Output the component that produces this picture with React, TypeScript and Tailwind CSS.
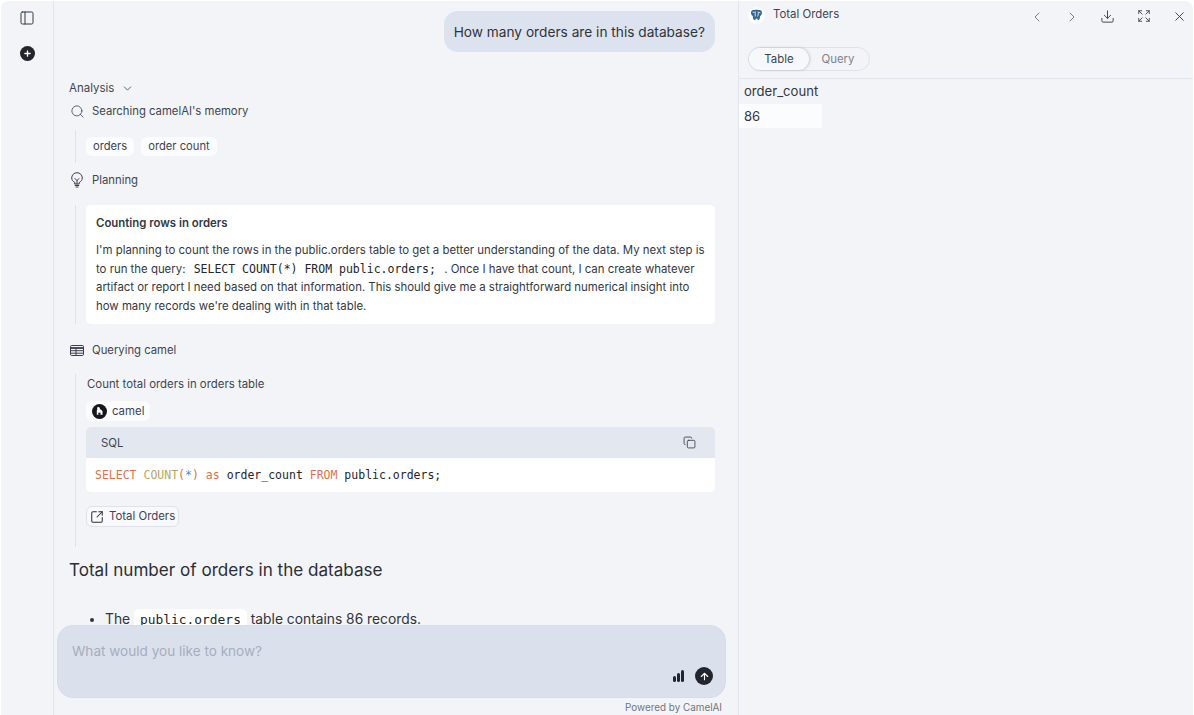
import React from "react";
import { ChevronDown, ChevronLeft, ChevronRight, Search, Copy, SquareArrowOutUpRight, Download, X, PanelLeft, Plus, ArrowUp, Expand } from "lucide-react";

const mono = "font-['DejaVu_Sans_Mono',monospace]";

function Step({ icon, label }: { icon: React.ReactNode; label: string }) {
  return (
    <div className="flex h-5 items-center gap-[7px] text-[11.3px] text-[#3f4450]">
      <span className="flex w-4 justify-center text-[#3a3f4a]">{icon}</span>
      <span>{label}</span>
    </div>
  );
}

function Chip({ children }: { children: React.ReactNode }) {
  return <span className="flex h-[19px] items-center rounded-md bg-[#fbfcfe] px-[7px] text-[11.2px] text-[#3f4450]">{children}</span>;
}

function Bulb() {
  return (
    <svg width="14" height="16" viewBox="0 0 14 16" fill="none" stroke="#3a3f4a" strokeWidth="1" strokeLinecap="round" strokeLinejoin="round">
      <path d="M4.800 10.500C3 9.500 1.700 8 1.700 6A5.300 5.300 0 0 1 12.300 6c0 2-1.300 3.500-3.100 4.500v1.500H4.800z" />
      <path d="M5 6.500l2 2 2-2M7 8.500V12M5.200 13.500h3.600M6 15h2" />
    </svg>
  );
}

function TableIcon() {
  return (
    <svg width="14" height="11" viewBox="0 0 14 11" fill="none" stroke="#3a3f4a" strokeWidth="1">
      <rect x=".5" y=".5" width="13" height="10" rx="1.200" />
      <path d="M.5 3h13" strokeWidth="1.800" />
      <path d="M.5 5.700h13M.5 8.200h13M6 3v7.500" />
    </svg>
  );
}

function Elephant() {
  return (
    <svg width="17" height="17" viewBox="0 0 17 17">
      <circle cx="8.500" cy="8.500" r="8.500" fill="#fbfcfe" />
      <path d="M3 5.500C3 3.400 4.700 2.600 6.400 3.100c1.300-.6 2.900-.6 4.200 0 1.700-.5 3.400.3 3.400 2.400 0 1.900-1 3.100-1.800 3.500-.2 1.700-.4 3.800-1.700 4-.8.100-1.100-.7-1.200-1.500-.5.200-1.100.2-1.500 0-.1 1.200-.6 1.800-1.400 1.600-1.200-.2-1.500-2.500-1.600-4C3.800 8.600 3 7.200 3 5.500z" fill="#336791" />
      <path d="M7.200 4.500v5M10 4.500c.6 1.500.3 3.300-.4 5M4.600 5.300h2M10.600 5.600h1.800" stroke="#fff" strokeWidth=".8" fill="none" />
    </svg>
  );
}

function CamelLogo() {
  return (
    <svg width="15" height="15" viewBox="0 0 15 15">
      <circle cx="7.500" cy="7.500" r="7.500" fill="#15171b" />
      <path d="M5.500 3.200c.9-.5 1.900-.2 2.200.7.200.6.100 1 .6 1.400l1.700 1.100c.4.300.5.700.5 1.200v3.200H4.800V6.200c.5-.1.600-.4.500-.8-.1-.8-.3-1.600.2-2.200z" fill="#fff" />
      <rect x="6.300" y="8.700" width="2.200" height="2.100" fill="#15171b" />
    </svg>
  );
}

export default function App() {
  return (
    <div className="flex h-[715px] w-[1194px] overflow-hidden bg-white font-['Inter',sans-serif]">
      <div className="mx-px mt-px mb-0 flex w-full overflow-hidden rounded-t-lg bg-[#f2f4f8]">
        {/* Sidebar */}
        <aside className="flex w-[53px] shrink-0 flex-col items-center border-r border-[#e2e5ee] pt-[9px]">
          <PanelLeft size={16} strokeWidth={1.5} className="text-[#333842]" />
          <span className="mt-[20px] flex h-[15px] w-[15px] items-center justify-center rounded-full bg-[#22252b]">
            <Plus size={9} strokeWidth={3.5} className="text-white" />
          </span>
        </aside>

        {/* Chat */}
        <main className="relative h-full w-[685px] shrink-0 overflow-hidden border-r border-[#e2e5ee]">
          <div className="pl-[15px] pr-[23px] pt-[10px]">
            <div className="flex justify-end">
              <div className="flex h-[41px] items-center rounded-[14px] bg-[#dde3ee] px-[10px] pt-[2px] text-[13.7px] text-[#2f333c]">
                How many orders are in this database?
              </div>
            </div>

            <div className="mt-[26px] flex h-5 items-center gap-[7px] text-[11.5px] text-[#3f4450]">
              <span className="pt-[2px]">Analysis</span> <ChevronDown size={13} strokeWidth={1.5} />
            </div>

            <div className="mt-[3px]">
              <Step icon={<Search size={15} strokeWidth={1.25} />} label="Searching camelAI's memory" />
            </div>
            <div className="ml-[6px] mt-[9px] flex h-[33px] items-center gap-[7px] border-l border-[#dfe2ea] pl-[10px]">
              <Chip>orders</Chip>
              <Chip>order count</Chip>
            </div>

            <div className="mt-[7px]">
              <Step icon={<Bulb />} label="Planning" />
            </div>

            <div className="ml-[6px] mt-[15px] border-l border-[#dfe2ea] pl-[10px]">
              <div className="h-[119px] rounded-[5px] bg-white px-[10px] pt-[9px] text-[11.4px] leading-[18.4px] text-[#333842]">
                <div className="font-semibold">Counting rows in orders</div>
                <p className="mt-[9px]">
                  I'm planning to count the rows in the public.orders table to get a better understanding of the data. My next step is to run the query: <code className={`${mono} px-[5px] text-[11.5px] text-[#22252b]`}>SELECT COUNT(*) FROM public.orders;</code> . Once I have that count, I can create whatever artifact or report I need based on that information. This should give me a straightforward numerical insight into how many records we're dealing with in that table.
                </p>
              </div>
            </div>

            <div className="mt-[16px]">
              <Step icon={<TableIcon />} label="Querying camel" />
            </div>

            <div className="ml-[6px] mt-[14px] border-l border-[#dfe2ea] pb-[20px] pl-[10px]">
              <div className="flex h-5 items-center pl-px pt-[2px] text-[11.4px] text-[#3f4450]">Count total orders in orders table</div>
              <div className="mt-[7px] flex">
                <span className="flex h-[20px] items-center gap-[5px] rounded-md bg-[#fbfcfe] pl-[6px] pr-[6px] pt-px text-[11.4px] text-[#3f4450]">
                  <CamelLogo />
                  camel
                </span>
              </div>
              <div className="mt-[6px] overflow-hidden rounded-[5px]">
                <div className="flex h-[31px] items-center justify-between bg-[#e3e7ef] pl-[15px] pr-[19px] text-[11.4px] text-[#3f4450]">
                  <span className="pt-[2px]">SQL</span>
                  <Copy size={13} strokeWidth={1.5} className="text-[#333842]" />
                </div>
                <div className={`${mono} flex h-[34px] items-center bg-white px-[9px] pt-[2px] text-[11.5px] text-[#22252b]`}>
                  <span className="whitespace-pre">
                    <span className="text-[#d8734a]">SELECT</span>{" "}<span className="text-[#b5a85c]">COUNT</span><span className="text-[#d8734a]">(</span><span className="text-[#3f8fd6]">*</span><span className="text-[#d8734a]">)</span>{" "}<span className="text-[#d8734a]">as</span> order_count <span className="text-[#d8734a]">FROM</span> public.orders;
                  </span>
                </div>
              </div>
              <div className="mt-[14px] flex">
                <span className="flex h-[21px] items-center gap-[5px] rounded-md border border-[#dfe2ea] bg-[#f8f9fc] pl-[3px] pr-[3px] pt-px text-[11.4px] text-[#3f4450]">
                  <SquareArrowOutUpRight size={14} strokeWidth={1.75} className="text-[#2a2e36]" />
                  Total Orders
                </span>
              </div>
            </div>

            <h2 className="mt-[8px] h-[30px] text-[17.1px] leading-[30px] text-[#2a2e36]">Total number of orders in the database</h2>

            <ul className="ml-[21px] mt-[22px] list-disc text-[13.8px] text-[#2f333c] marker:text-[#2f333c]">
              <li className="ml-[15px] h-[24px] leading-[24px]">
                The <code className={`${mono} rounded-[5px] bg-white px-[6px] py-[3px] text-[12.9px] text-[#22252b]`}>public.orders</code> table contains 86 records.
              </li>
            </ul>
          </div>

          {/* Composer */}
          <div className="absolute left-[3px] top-[624px] h-[73px] w-[669px] rounded-[16px] border border-[#d6dce8] bg-[#dbe1ec] px-[14px] pt-[15px]">
            <div className="text-[13.57px] leading-5 text-[#a7adbd]">What would you like to know?</div>
            <div className="absolute right-[12px] top-[41px] flex items-center gap-[11px]">
              <span className="flex items-end gap-[1px]">
                <span className="h-[6px] w-[3px] rounded-full bg-[#22252b]" />
                <span className="h-[9px] w-[3px] rounded-full bg-[#22252b]" />
                <span className="h-[12px] w-[3px] rounded-full bg-[#22252b]" />
              </span>
              <span className="flex h-[18px] w-[18px] items-center justify-center rounded-full bg-[#22252b]">
                <ArrowUp size={11} strokeWidth={2.5} className="text-white" />
              </span>
            </div>
          </div>
          <div className="absolute right-[16px] top-[700px] text-[9.9px] leading-[13px] text-[#70747e]">Powered by CamelAI</div>
        </main>

        {/* Right panel */}
        <section className="min-w-0 flex-1">
          <div className="flex h-[46px] justify-between pl-[9px] pr-[6px]">
            <div className="flex h-[28px] items-center gap-[8px] text-[11.4px] text-[#3f4450]">
              <Elephant />
              Total Orders
            </div>
            <div className="flex items-start pt-[8px] text-[#3a3f4a]">
              <ChevronLeft size={16} strokeWidth={1} className="-ml-px" />
              <ChevronRight size={16} strokeWidth={1} className="ml-[19px]" />
              <Download size={15} strokeWidth={1.5} className="ml-[20px]" />
              <Expand size={14} strokeWidth={1.5} className="ml-[22px]" />
              <X size={15} strokeWidth={1.5} className="ml-[21px]" />
            </div>
          </div>
          <div className="flex h-[32px] items-start border-b border-[#e2e5ee] pl-[9px]">
            <div className="flex h-[24px] w-[122px] rounded-full border border-[#dfe2ea] text-[11.4px]">
              <span className="flex w-[60px] items-center justify-center rounded-full bg-[#f7f8fb] pt-[2px] text-[#3f4450] shadow-[1px_0_3px_rgba(60,70,100,0.25)]">Table</span>
              <span className="flex flex-1 items-center justify-center pr-[2px] pt-[2px] text-[#7d828e]">Query</span>
            </div>
          </div>
          <div className="w-[83px] text-[13.1px] text-[#333842]">
            <div className="flex h-[25px] items-center pl-[5px]">order_count</div>
            <div className="flex h-[24px] items-center bg-[#fbfcfe] pl-[5px] pt-px">86</div>
          </div>
        </section>
      </div>
    </div>
  );
}
